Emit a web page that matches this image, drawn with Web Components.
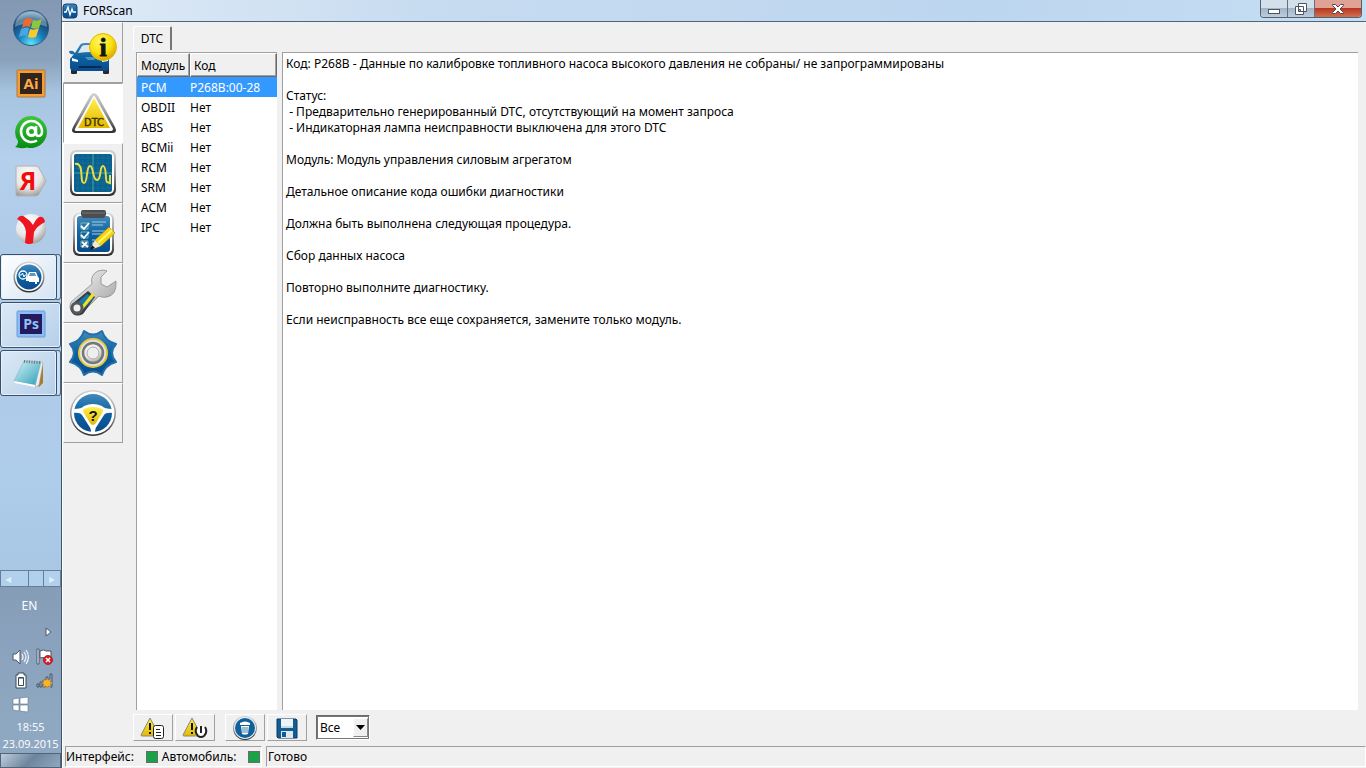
<!DOCTYPE html>
<html lang="ru">
<head>
<meta charset="utf-8">
<title>FORScan</title>
<style>
    body {
        margin: 0;
        display: flex;
        height: 100vh;
        overflow: hidden;
        background: #f0f0f0;
        color: #000;
        font-family: 'Noto Sans', 'DejaVu Sans Condensed', sans-serif;
        font-size: 12px;
        line-height: 16px;
    }
</style>
</head>
<body>
<task-bar></task-bar>
<app-window caption="FORScan">
    <side-bar slot="side"></side-bar>
    <dtc-page></dtc-page>
    <status-bar slot="status"></status-bar>
</app-window>

<script>
// Gradients shared by the icons, added to every shadow root that draws some
const DEFS = `
<svg width="0" height="0" style="position:absolute" aria-hidden="true">
    <defs>
        <linearGradient id="blue" x2="0" y2="1"><stop stop-color="#4389b9"/><stop offset=".5" stop-color="#0b62a2"/><stop offset="1" stop-color="#0a4b8c"/></linearGradient>
        <linearGradient id="gold" x2="0" y2="1"><stop stop-color="#fff04a"/><stop offset="1" stop-color="#e3b800"/></linearGradient>
        <linearGradient id="steel" x2="0" y2="1"><stop stop-color="#d4d4d4"/><stop offset=".5" stop-color="#999"/><stop offset="1" stop-color="#2c2c2c"/></linearGradient>
        <linearGradient id="silver" x2="1" y2="1"><stop stop-color="#fafafa"/><stop offset="1" stop-color="#9b9b9b"/></linearGradient>
        <linearGradient id="green" x2="0" y2="1"><stop stop-color="#3fc63e"/><stop offset="1" stop-color="#068c13"/></linearGradient>
        <linearGradient id="note" x2="1" y2="1"><stop stop-color="#d9f3f6"/><stop offset="1" stop-color="#2b9fb9"/></linearGradient>
        <radialGradient id="ball" cx=".4" cy=".3" r=".75"><stop stop-color="#fff"/><stop offset=".6" stop-color="#e6e6e6"/><stop offset="1" stop-color="#999"/></radialGradient>
        <radialGradient id="orb" cx=".5" cy=".95" r=".9"><stop stop-color="#5fe4fb"/><stop offset=".4" stop-color="#1880bd"/><stop offset=".8" stop-color="#16426c"/><stop offset="1" stop-color="#7fa3c0"/></radialGradient>
        <radialGradient id="sun" cx=".4" cy=".3" r=".7"><stop stop-color="#fff86a"/><stop offset=".6" stop-color="#fbe110"/><stop offset="1" stop-color="#dca800"/></radialGradient>
    </defs>
</svg>`;

const ICONS = {
    start: `<svg width="38" height="38" viewBox="0 0 38 38">
        <circle cx="19" cy="19" r="17.500" fill="url(#orb)" stroke="#315a7c"/>
        <path d="M3 18C3 8 11 3 19 3s16 5 16 15c-8-4-22-5-32 0z" fill="#cfe1ee" opacity=".4"/>
        <path d="M12 11c3-2 5-2 8-1l-2 8c-3-1-5-1-8 1z" fill="#ee6a2c"/>
        <path d="M21 11c3 1 5 1 9-1l-3 9c-3 1-5 1-8 0z" fill="#8dc63f"/>
        <path d="M9 20c3-1 5-2 8-1l-2 8c-3-1-5 0-8 1z" fill="#4aa6e0"/>
        <path d="M18 20c3 1 5 1 9-1l-3 9c-3 1-5 1-8 0z" fill="#fdc82f"/>
    </svg>`,
    ai: `<svg width="32" height="32" viewBox="0 0 32 32">
        <rect x="2" y="2" width="28" height="27" rx="1" fill="#f79d2d" stroke="#a9794a"/>
        <rect x="5" y="5" width="22" height="21" fill="#31241c"/>
        <text x="16" y="21" font-size="15" font-weight="bold" font-family="Open Sans, sans-serif" text-anchor="middle" fill="#ffab4b">Ai</text>
    </svg>`,
    mail: `<svg width="34" height="34" viewBox="0 0 34 34">
        <path d="M17 1a16 16 0 1 1-4 31.500Q7 34 1 32q3-2 3-6A16 16 0 0 1 17 1z" fill="url(#green)"/>
        <circle cx="17.500" cy="16.500" r="4" fill="none" stroke="#fff" stroke-width="3"/>
        <path d="M22 11v7q0 3 2.500 3Q28 21 28 16A10.500 10.500 0 1 0 23 25.500" fill="none" stroke="#fff" stroke-width="2.500"/>
    </svg>`,
    ya: `<svg width="34" height="34" viewBox="0 0 34 34">
        <path d="M3 3h19q2 0 3 2l7 13-7 13q-1 2-3 2H3q-1 0-1-1V4q0-1 1-1z" fill="url(#ball)" stroke="#b2b2b2"/>
        <text x="14" y="27" font-size="25" font-weight="bold" font-family="Open Sans, sans-serif" text-anchor="middle" fill="#f20d0d">Я</text>
    </svg>`,
    yabro: `<svg width="34" height="34" viewBox="0 0 34 34">
        <circle cx="17" cy="18" r="15" fill="url(#ball)"/>
        <path d="M3 8Q7 2 12 7q5 3 7 7 3-6 6-8 5-1 6 5-8 4-11 10l-1 11q-4 2-8 0l1-11Q11 12 3 8z" fill="#ee1620"/>
    </svg>`,
    forscan: `<svg width="34" height="34" viewBox="0 0 34 34">
        <circle cx="17" cy="17" r="15.500" fill="url(#steel)"/><circle cx="17" cy="17" r="14" fill="#fff"/><circle cx="17" cy="17" r="12.500" fill="url(#blue)"/>
        <path d="M14 17h1l2-5h7l2 5 1 1v4h-2v2h-2v-2h-6v-1h-3z" fill="#fff"/><path d="M18 13h5l1 3h-7z" fill="#5c97c0"/>
        <circle cx="11" cy="15" r="4" fill="#0b62a2" stroke="#fff" stroke-width="1.300"/>
        <path d="M8 15h1.500l1-2 1.500 4 1-2h1M14 18l4 4" fill="none" stroke="#fff"/>
    </svg>`,
    ps: `<svg width="32" height="32" viewBox="0 0 32 32">
        <rect x="2" y="2" width="28" height="26" rx="1" fill="#8abcf9" stroke="#6f9bd0"/>
        <rect x="5" y="5" width="22" height="20" fill="#251a5c"/>
        <text x="16" y="20" font-size="14" font-weight="bold" font-family="Open Sans, sans-serif" text-anchor="middle" fill="#8fc3fb">Ps</text>
    </svg>`,
    notepad: `<svg width="34" height="32" viewBox="0 0 34 32">
        <path d="M31 5v21l-4 4-2-3z" fill="#a97b32"/><path d="M28 4l3 2-4 22-4 2z" fill="#eee" stroke="#999" stroke-width=".5"/>
        <path d="M12 4l17 1-6 23L2 24z" fill="url(#note)" stroke="#6cafbc" stroke-width=".5"/><path d="M2 24l21 4v2L3 26z" fill="#fff"/>
        <path d="M12 4.500l17 1" stroke="#777" stroke-width="3" stroke-dasharray="1 1.500"/>
    </svg>`,
    pulse: `<svg width="16" height="16" viewBox="0 0 16 16">
        <rect x="1" y="1" width="14" height="14" rx="3" fill="url(#blue)" stroke="#1d4161"/>
        <path d="M2 9h2l2-5 2 8 2-6 1 3h3" fill="none" stroke="#fff" stroke-width="1.300"/>
    </svg>`,
    car: `<svg width="48" height="48" viewBox="0 0 48 48">
        <rect x="2" y="37" width="6" height="8" rx="1" fill="#26282b"/><rect x="34" y="37" width="6" height="8" rx="1" fill="#26282b"/>
        <path d="M0 23q0-2 4-1l2 2 5-8q1-2 5-2h14q3 0 5 3l5 9v13q-1 3-4 3H5q-3 0-4-3V30l4-5q-4 1-5-2z" fill="url(#blue)"/>
        <path d="M9 24l4-7q1-1 4-1h13l5 8q-13-2-26 0z" fill="#dfe8ee"/>
        <path d="M3 29l6 2v2l-6-1zM39 29l-6 2v2l6-1z" fill="#fff"/><path d="M9 37h24l-1 2H10z" fill="#052c55"/><path d="M16 28h12l-3 3h-6z" fill="#4c93c3"/>
        <circle cx="34" cy="18" r="13.500" fill="url(#sun)" stroke="#e3b900"/>
        <text x="34" y="27" font-size="26" font-weight="bold" font-family="Liberation Serif, serif" text-anchor="middle" fill="#151515" stroke="#151515" stroke-width=".8">i</text>
    </svg>`,
    dtc: `<svg width="48" height="48" viewBox="0 0 48 48">
        <path d="M24 4q2 0 4 3l17 31q3 6-3 6H6q-6 0-3-6L20 7q2-3 4-3z" fill="url(#steel)"/>
        <path d="M24 8l18 32q0 1-1 1H7q-2 0-1-1z" fill="#fff" stroke="#fff" stroke-width="2" stroke-linejoin="round"/>
        <path d="M24 9l16 30H8z" fill="url(#gold)"/>
        <text x="24" y="37" font-size="11" font-family="DejaVu Sans Condensed, sans-serif" text-anchor="middle" fill="#3a3300" stroke="#3a3300" stroke-width=".4">DTC</text>
    </svg>`,
    scope: `<svg width="48" height="48" viewBox="0 0 48 48">
        <rect x="1" y="1" width="46" height="46" rx="6" fill="url(#steel)"/><rect x="3" y="3" width="42" height="42" rx="5" fill="#fff"/>
        <rect x="5" y="5" width="38" height="38" rx="2" fill="#096091"/>
        <path d="M9 5v38M14 5v38M19 5v38M29 5v38M34 5v38M39 5v38M5 9h38M5 14h38M5 19h38M5 29h38M5 34h38M5 39h38" stroke="#24858e" stroke-width=".7" stroke-dasharray="1 1"/>
        <path d="M24 5v38M5 24h38" stroke="#46a89a"/>
        <path d="M6 15q5-1 6 6c1 7 0 13 3 13 4 0 2-17 6-17s2 14 7 14 2-14 6-14c4 0 2 15 4 16l3 1v-8" fill="none" stroke="#e9db43" stroke-width="2"/>
    </svg>`,
    checklist: `<svg width="48" height="48" viewBox="0 0 48 48">
        <rect x="4" y="4" width="41" height="43" rx="6" fill="url(#steel)"/><rect x="6" y="5" width="37" height="40" rx="5" fill="#fff"/>
        <rect x="8" y="7" width="33" height="36" rx="3" fill="url(#blue)"/>
        <path d="M12 3q0-2 2-2h21q2 0 2 2v3l-2 3H14l-2-3z" fill="#4b4d50"/><path d="M13 4h23" stroke="#77797c"/>
        <path d="M12 14h7v6h-7zM12 23h7v6h-7zM12 32h7v6h-7z" fill="none" stroke="#7fb5a6"/>
        <path d="M12 17l3 3 5-6M12 26l3 3 5-6M13 33l6 5M18 33l-5 5" fill="none" stroke="#fff" stroke-width="1.800"/>
        <path d="M23 13h14M23 16h11M23 22h14M23 25h11M23 31h8M23 34h5" stroke="#a7cbe2"/>
        <path d="M40 18l6 6-14 13-6-6z" fill="#f5d511" stroke="#a68100" stroke-width=".6"/><path d="M43 21L29 34" stroke="#fff370" stroke-width="2"/>
        <path d="M26 31l6 6-8 3-2-2z" fill="#f3e7c8"/><path d="M23 36l3 3-5 2z" fill="#111"/>
    </svg>`,
    wrench: `<svg width="48" height="48" viewBox="0 0 48 48">
        <path d="M23 15Q21 6 29 2q6-2 9 0l-6 6v7l6 3 9-6q1 14-9 16-5 1-8-1L16 41Q12 48 5 45q-6-4-3-12z" fill="url(#silver)" stroke="#8b8b8b" stroke-width=".8"/>
        <path d="M19 22l7 6-12 17q-6 3-10 0-4-5-1-10z" fill="#3b3d40"/>
        <path d="M18 25l7 4-12 13-6-7z" fill="#1578ae"/><path d="M23 24l3 2-12 14-2-2z" fill="#f5e21c"/>
        <circle cx="8" cy="39" r="5" fill="#f0f0f0" stroke="#55585b" stroke-width="3"/>
    </svg>`,
    gear: `<svg width="48" height="48" viewBox="0 0 48 48">
        <path d="M15 2Q24 9 33 2 36 12 47 15 39 24 47 33 36 36 33 46 24 39 15 46 12 36 1 33 9 24 1 15 12 12 15 2z" fill="url(#blue)" stroke="#2270aa" stroke-linejoin="round" stroke-width="2"/>
        <circle cx="24" cy="24" r="14" fill="#dfe8ea" stroke="#e8c63b" stroke-width="2"/><circle cx="24" cy="24" r="10" fill="url(#ball)" stroke="#777" stroke-width="2.500"/><circle cx="24" cy="24" r="6" fill="#efefef" stroke="#aaa"/>
    </svg>`,
    wheel: `<svg width="48" height="48" viewBox="0 0 48 48">
        <circle cx="24" cy="24" r="23" fill="url(#steel)"/><circle cx="24" cy="24" r="21.500" fill="#fff"/><circle cx="24" cy="24" r="19" fill="url(#blue)"/>
        <path d="M4 20q9 0 11-3 9-4 18 0 2 3 11 3v4q-7-1-9 2l-7 11q-2 2-2 7h-4q0-5-2-7l-7-11q-2-3-9-2z" fill="#fff"/>
        <path d="M15 20q9-4 18 0 2 2 0 4l-6 10q-3 4-6 0l-6-10q-2-2 0-4z" fill="url(#gold)"/>
        <text x="24" y="32" font-size="15" font-weight="bold" font-family="Liberation Sans, sans-serif" text-anchor="middle" fill="#111">?</text>
    </svg>`,
    warnDoc: `<svg width="26" height="22" viewBox="0 0 26 22">
        <path d="M10 1L1 18q0 1 1 1h17q1 0 0-1z" fill="url(#gold)" stroke="#8b8878"/><path d="M10 6v7M10 15v2" stroke="#111" stroke-width="2"/>
        <rect x="13.500" y="8.500" width="10" height="13" rx="2" fill="#fff" stroke="#222"/><path d="M16 12.500h4M16 15.500h5M16 18.500h5" stroke="#222"/>
    </svg>`,
    warnPower: `<svg width="26" height="22" viewBox="0 0 26 22">
        <path d="M10 1L1 18q0 1 1 1h17q1 0 0-1z" fill="url(#gold)" stroke="#8b8878"/><path d="M10 6v7M10 15v2" stroke="#111" stroke-width="2"/>
        <circle cx="19" cy="15" r="6" fill="#fff"/><path d="M15 10q-3 5 1 9 3 2 6 0 4-4 1-9" fill="none" stroke="#222" stroke-width="2"/><path d="M19 9v7" stroke="#222" stroke-width="2"/>
    </svg>`,
    trash: `<svg width="26" height="26" viewBox="0 0 26 26">
        <circle cx="13" cy="13" r="12" fill="url(#steel)"/><circle cx="13" cy="13" r="11" fill="#e9f0f5"/><circle cx="13" cy="13" r="10" fill="#10619b"/>
        <path d="M8 8q5-3 10 0v2H8zM9 11h8l-1 8q-3 1-6 0z" fill="#fff"/><path d="M11 12v6M13 12v6M15 12v6" stroke="#10619b" stroke-width=".8"/>
    </svg>`,
    save: `<svg width="24" height="24" viewBox="0 0 24 24">
        <path d="M2 3h19l1 1v18H3l-1-1z" fill="#125c96" stroke="#0a3b66"/><path d="M6 3h12v9H6z" fill="#eef3f6"/><path d="M6 11h12" stroke="#9ac0da"/>
        <path d="M6 15h12v7H6z" fill="#e3e7ea"/><path d="M7 16h4v5H7z" fill="#125c96"/>
    </svg>`,
    hidden: `<svg width="7" height="10" viewBox="0 0 7 10"><path d="M1 1l5 4-5 4z" fill="#fff" stroke="#46596c"/></svg>`,
    sound: `<svg width="18" height="16" viewBox="0 0 18 16">
        <path d="M1 5h3l4-4v14l-4-4H1z" fill="#fff" stroke="#46596c"/><path d="M10 5q2 3 0 6M12 3q4 5 0 10M14 1q5 7 0 14" fill="none" stroke="#f2f5f8" stroke-width="1.200"/>
    </svg>`,
    flag: `<svg width="18" height="18" viewBox="0 0 18 18">
        <path d="M1 1h2v15H1zM4 3q4-2 6 0h5v8q-5 1-6-1-2-1-5 0z" fill="#fff" stroke="#46596c"/><circle cx="12" cy="12" r="4.500" fill="#d91f26" stroke="#a8262a"/>
        <path d="M10 10l4 4M14 10l-4 4" stroke="#fff" stroke-width="1.500"/>
    </svg>`,
    battery: `<svg width="14" height="18" viewBox="0 0 14 18">
        <path d="M4 1h6v2h2v13H2V3h2z" fill="#fff" stroke="#374b5c"/><path d="M4.500 5.500h5v8h-5z" fill="#8fa4b7" stroke="#374b5c"/><path d="M5 7h4v6H5z" fill="#fff"/>
    </svg>`,
    network: `<svg width="18" height="16" viewBox="0 0 18 16">
        <path d="M1 11h2v3H1zM4 9h2v5H4zM7 7h2v7H7zM10 4h2v10h-2zM14 1h2v13h-2z" fill="#a4b2bf" stroke="#465768"/>
        <path d="M11 5l1 3 3-2-1 3 3 1-3 1 1 3-3-1-1 3-1-3-3 1 1-3-3-1 3-1-1-3 3 2z" fill="#f7a516"/><circle cx="11" cy="10" r="3" fill="#fcb423"/>
    </svg>`,
    win: `<svg width="18" height="18" viewBox="0 0 18 18">
        <path d="M1 3l6-1v6H1zM8 2l8-1v7H8zM1 9h6v6l-6-1zM8 9h8v7l-8-1z" fill="#fff" stroke="#63788c" stroke-width=".6"/>
    </svg>`
};

function build(host, html) {
    host.attachShadow({ mode: 'open' });
    host.shadowRoot.innerHTML = `
        <style>
            * { box-sizing: border-box; }
            button, select { font: inherit; color: inherit; padding: 0; border: 0; margin: 0; }
            svg { display: block; flex: none; }
        </style>
        ${DEFS}${html}`;
}

/* Desktop task bar, docked to the left */
class TaskBar extends HTMLElement {
    constructor() {
        super();
        build(this, `
<style>
    :host {
        flex: none;
        width: 61px;
        display: flex;
        flex-direction: column;
        background: linear-gradient(#8298b3, #8ba2bc 60px, #a6c3df 92px, #b4d0ec 160px, #afcbe8 240px, #aecdeb 480px, #98bad9);
    }
    .launch { display: flex; flex-direction: column; padding-bottom: 2px; }
    .launch button, .tasks button {
        display: flex;
        align-items: center;
        justify-content: center;
        height: 48px;
        background: none;
    }
    .launch button:first-child { height: 60px; padding-bottom: 4px; }
    .tasks { display: flex; flex-direction: column; flex: 1; gap: 2px; }
    .tasks button {
        height: 46px;
        border: 1px solid #3a5068;
        border-radius: 3px;
        background: linear-gradient(135deg, #dce9f5, #b5cfe9);
        box-shadow: inset 0 0 0 1px #e4f1fc;
    }
    .tasks .group { margin-right: 4px; box-shadow: inset 0 0 0 1px #e4f1fc, 4px 0 0 -1px #c8dff4, 4px 0 0 0 #4e657c; }
    .tasks .group:first-child { background: linear-gradient(135deg, #fff, #d4e4f3); }
    .scroll { display: grid; grid-template-columns: 28fr 16fr 16fr; border: 1px solid #667e96; height: 17px; }
    .scroll button { background: #b0d0ee; color: #e2eef8; font-size: 8px; line-height: 14px; border-right: 1px solid #667e96; }
    .scroll button:first-child { padding-right: 12px; }
    .scroll button:last-child { border: 0; }
    .tray {
        display: grid;
        grid-template-columns: 24px 24px;
        grid-template-rows: 26px 26px;
        grid-auto-rows: 24px;
        justify-content: center;
        place-items: center;
        padding: 6px 0 0 4px;
        background: linear-gradient(#869db8, #8fa8c2);
        color: #fff;
    }
    .lang { grid-column: 1 / 3; padding-right: 6px; }
    .arrow { grid-column: 2; padding-left: 8px; }
    .clock {
        padding: 1px 0;
        background: #8fa8c2;
        color: #fff;
        text-align: center;
        line-height: 17px;
        font-family: 'Open Sans', sans-serif;
        font-size: 11px;
    }
    .desktop { height: 15px; border: 1px solid #516478; background: linear-gradient(135deg, #bdcedd, #6e869d 50%, #91a9c0); }
</style>
<div class="launch">
    <button aria-label="Пуск">${ICONS.start}</button>
    <button aria-label="Illustrator">${ICONS.ai}</button>
    <button aria-label="Почта">${ICONS.mail}</button>
    <button aria-label="Яндекс">${ICONS.ya}</button>
    <button aria-label="Браузер">${ICONS.yabro}</button>
</div>
<div class="tasks">
    <button class="group" aria-label="FORScan">${ICONS.forscan}</button>
    <button aria-label="Photoshop">${ICONS.ps}</button>
    <button class="group" aria-label="Блокнот">${ICONS.notepad}</button>
</div>
<div class="scroll"><button aria-label="Назад">◀</button><button aria-label="Панель"></button><button aria-label="Вперёд">▶</button></div>
<div class="tray">
    <span class="lang">EN</span>
    <span class="arrow">${ICONS.hidden}</span>
    ${ICONS.sound}${ICONS.flag}${ICONS.battery}${ICONS.network}${ICONS.win}
</div>
<div class="clock">18:55<br>23.09.2015</div>
<button class="desktop" aria-label="Рабочий стол"></button>
        `);
    }
}

/* Window frame: caption, side column, page, status line */
class AppWindow extends HTMLElement {
    constructor() {
        super();
        build(this, `
<style>
    :host {
        flex: 1;
        min-width: 0;
        display: flex;
        flex-direction: column;
        border-left: 1px solid #3f566d;
    }
    header {
        display: flex;
        align-items: center;
        gap: 5px;
        height: 22px;
        padding-right: 4px;
        border-bottom: 1px solid #4f657b;
        background: linear-gradient(90deg, #dfeaf6, #c6dbf0 30%, #bdd6ef 70%, #c6def3);
    }
    h1 { flex: 1; margin: 0; font-size: 12px; font-weight: normal; }
    .controls {
        align-self: flex-start;
        display: flex;
        border: 1px solid #52616f;
        border-top: 0;
        border-radius: 0 0 4px 4px;
        overflow: hidden;
    }
    .controls button {
        display: grid;
        place-items: center;
        width: 27px;
        height: 17px;
        border-right: 1px solid #62717f;
        background: linear-gradient(#d3dfe9 45%, #a3b5c7 50%, #bccddc);
    }
    .controls .close { width: 46px; border: 0; background: linear-gradient(#dfa294 45%, #b93722 50%, #d0704f); }
    main { flex: 1; min-height: 0; display: flex; border-left: 1px solid #fff; }
    .page { flex: 1; min-width: 0; display: flex; }
</style>
<header>
    ${ICONS.pulse}
    <h1>${this.getAttribute('caption')}</h1>
    <div class="controls">
        <button aria-label="Свернуть"><svg width="14" height="14"><rect x="1.500" y="7.500" width="11" height="4" fill="#fff" stroke="#4a5663"/></svg></button>
        <button aria-label="Развернуть"><svg width="14" height="14"><path d="M4.500 1.500h8v8h-8zM1.500 4.500h8v8h-8z" fill="#fff" stroke="#4a5663"/><path d="M4.500 7.500h2v2h-2z" fill="#9fb2c5" stroke="#4a5663"/></svg></button>
        <button class="close" aria-label="Закрыть"><svg width="14" height="12"><path d="M1.500 1.500h3l2.500 2.500 2.500-2.500h3v1L9 6l3.500 3.500v1h-3L7 8l-2.500 2.500h-3v-1L5 6 1.500 2.500z" fill="#fff" stroke="#59454a"/></svg></button>
    </div>
</header>
<main>
    <slot name="side"></slot>
    <div class="page"><slot></slot></div>
</main>
<slot name="status"></slot>
        `);
    }
}

class SideBar extends HTMLElement {
    constructor() {
        super();
        const items = [
            ['car', 'Автомобиль'], ['dtc', 'Коды неисправностей'], ['scope', 'Осциллограф'],
            ['checklist', 'Тесты'], ['wrench', 'Сервис'], ['gear', 'Настройки'], ['wheel', 'Справка']
        ];
        build(this, `
<style>
    :host { flex: none; width: 60px; display: flex; flex-direction: column; }
    button {
        display: grid;
        place-items: center;
        height: 60px;
        border: 1px solid;
        border-color: #fff #a0a0a0 #a0a0a0 #fff;
        background: #f0f0f0;
    }
    button:first-of-type { height: 61px; }
    button.active { border-color: #a0a0a0 #fff #fff #a0a0a0; background: #fff; padding-left: 2px; }
</style>
${items.map(([icon, label]) => `<button class="${icon === 'dtc' ? 'active' : ''}" aria-label="${label}">${ICONS[icon]}</button>`).join('')}
        `);
    }
}

class ModuleList extends HTMLElement {
    constructor() {
        super();
        const rows = [
            ['PCM', 'P268B:00-28'], ['OBDII', 'Нет'], ['ABS', 'Нет'], ['BCMii', 'Нет'],
            ['RCM', 'Нет'], ['SRM', 'Нет'], ['ACM', 'Нет'], ['IPC', 'Нет']
        ];
        build(this, `
<style>
    :host {
        flex: none;
        width: 141px;
        background: #fff;
        border: 1px solid #a0a0a0;
        border-width: 1px 0 0 1px;
    }
    table { width: 100%; border-collapse: separate; border-spacing: 0; table-layout: fixed; }
    th, td { padding: 0 0 0 4px; text-align: left; font-weight: normal; white-space: nowrap; }
    th {
        height: 24px;
        background: #f0f0f0;
        border: 1px solid;
        border-color: #fff #696969 #696969 #fff;
        box-shadow: inset -1px -1px #a0a0a0;
        padding: 2px 0 0 3px;
    }
    th:first-child { width: 53px; }
    td { height: 20px; padding-top: 1px; }
    td:last-child { padding-left: 0; }
    .selected td { background: #3399ff; color: #fff; }
</style>
<table>
    <thead><tr><th>Модуль</th><th>Код</th></tr></thead>
    <tbody>${rows.map((r, i) => `<tr${i ? '' : ' class="selected"'}><td>${r[0]}</td><td>${r[1]}</td></tr>`).join('')}</tbody>
</table>
        `);
    }
}

class DtcDetails extends HTMLElement {
    constructor() {
        super();
        build(this, `
<style>
    :host {
        flex: 1;
        min-width: 0;
        padding: 3px;
        background: #fff;
        border: 1px solid #a0a0a0;
        border-width: 1px 0 0 1px;
        overflow: auto;
    }
    slot { display: block; white-space: pre-wrap; }
</style><slot></slot>`);
    }
}

class DtcPage extends HTMLElement {
    constructor() {
        super();
        build(this, `
<style>
    :host { flex: 1; min-width: 0; display: flex; flex-direction: column; padding: 4px 8px 5px 10px; }
    .tab {
        align-self: flex-start;
        width: 39px;
        height: 24px;
        border: 1px solid #fff;
        border-right: 2px solid #777;
        border-bottom: 0;
        border-radius: 3px 2px 0 0;
        background: #f0f0f0;
    }
    .panes { flex: 1; min-height: 0; display: flex; gap: 5px; margin: 2px 0 0 3px; }
    .tools { display: flex; align-items: center; gap: 2px; padding-top: 4px; }
    .tools button {
        display: grid;
        place-items: center;
        width: 40px;
        height: 27px;
        border: 1px solid;
        border-color: #fff #a0a0a0 #a0a0a0 #fff;
        background: #f0f0f0;
    }
    .clear { margin-left: 8px; }
    .filter {
        display: grid;
        margin-left: 7px;
        border: 1px solid;
        border-color: #696969 #fff #fff #696969;
    }
    select {
        grid-area: 1 / 1;
        appearance: none;
        width: 52px;
        height: 23px;
        padding: 0 2px;
        border: 1px solid #777;
        border-radius: 0;
        background: #fff;
    }
    .arrow {
        grid-area: 1 / 1;
        justify-self: end;
        align-self: center;
        z-index: 1;
        width: 15px;
        height: 19px;
        margin-right: 1px;
        display: grid;
        place-items: center;
        border: 1px solid;
        border-color: #fff #888 #888 #fff;
        background: #f0f0f0;
        pointer-events: none;
    }
</style>
<button class="tab">DTC</button>
<div class="panes">
    <module-list></module-list>
    <dtc-details>Код: P268B - Данные по калибровке топливного насоса высокого давления не собраны/ не запрограммированы

Статус:
 - Предварительно генерированный DTC, отсутствующий на момент запроса
 - Индикаторная лампа неисправности выключена для этого DTC

Модуль: Модуль управления силовым агрегатом

Детальное описание кода ошибки диагностики

Должна быть выполнена следующая процедура.

Сбор данных насоса

Повторно выполните диагностику.

Если неисправность все еще сохраняется, замените только модуль.</dtc-details>
</div>
<div class="tools">
    <button aria-label="Прочитать DTC">${ICONS.warnDoc}</button>
    <button aria-label="Самотестирование">${ICONS.warnPower}</button>
    <button class="clear" aria-label="Сбросить DTC">${ICONS.trash}</button>
    <button aria-label="Сохранить">${ICONS.save}</button>
    <div class="filter">
        <select aria-label="Фильтр"><option>Все</option></select>
        <span class="arrow"><svg width="9" height="5"><path d="M0 0h9L4.500 5z"/></svg></span>
    </div>
</div>
        `);
    }
}

class StatusBar extends HTMLElement {
    constructor() {
        super();
        build(this, `
<style>
    :host { display: flex; gap: 4px; padding: 0 0 1px 2px; border-left: 1px solid #fff; }
    .pane {
        display: flex;
        align-items: center;
        height: 21px;
        padding: 0 1px;
        border: 1px solid;
        border-color: #a0a0a0 #fff #fff #a0a0a0;
        white-space: nowrap;
    }
    .links { width: 197px; padding-left: 0; }
    .last { flex: 1; }
    i { flex: none; width: 12px; height: 12px; margin: 0 4px 0 12px; background: #18a348; border: 1px solid #6b6b6b; }
    i:last-child { margin-right: 0; }
</style>
<div class="pane links"><span>Интерфейс:</span><i></i><span>Автомобиль:</span><i></i></div>
<div class="pane last">Готово</div>
        `);
    }
}

customElements.define('task-bar', TaskBar);
customElements.define('app-window', AppWindow);
customElements.define('side-bar', SideBar);
customElements.define('module-list', ModuleList);
customElements.define('dtc-details', DtcDetails);
customElements.define('dtc-page', DtcPage);
customElements.define('status-bar', StatusBar);
</script>
</body>
</html>
